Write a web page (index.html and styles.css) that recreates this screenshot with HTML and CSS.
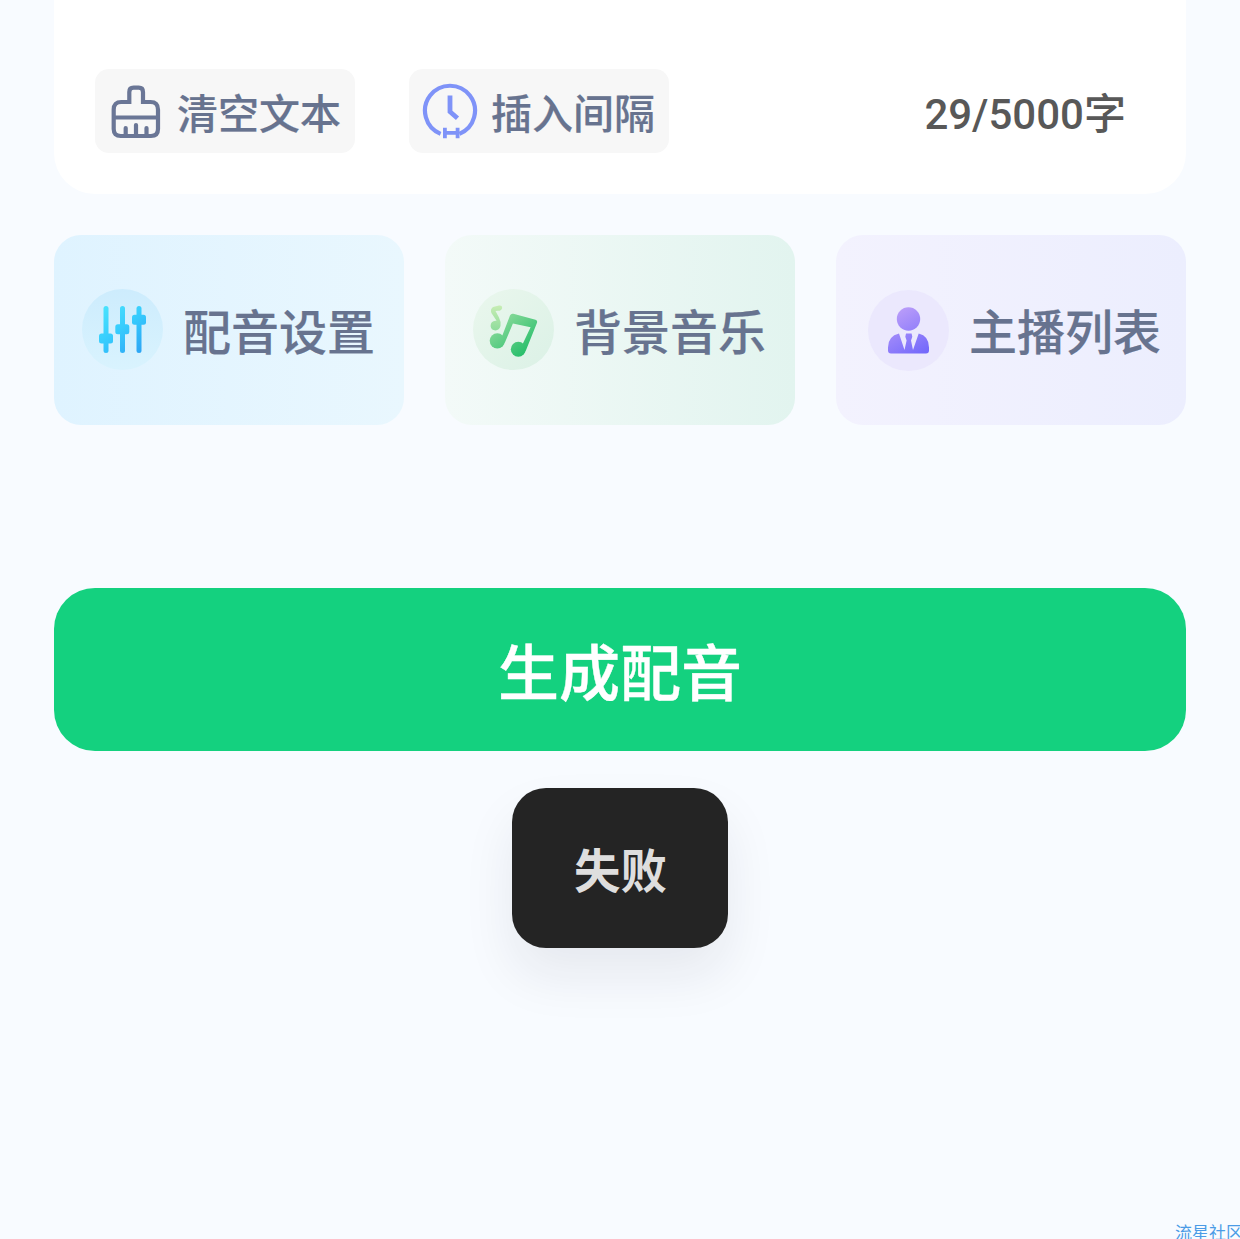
FILE: index.html
```html
<!DOCTYPE html>
<html lang="zh-CN">
<head>
    <meta charset="UTF-8">
    <meta name="viewport" content="width=device-width, initial-scale=1.0">
    <title>配音</title>
    <link rel="stylesheet" href="styles.css">
</head>
<body>
    <div class="container">
        <!-- 文本框底部工具栏 -->
        <div class="editor">
            <button class="tool">
                <svg width="56" height="56" viewBox="0 0 56 56" fill="none" stroke="#6a7696" stroke-width="4.2" stroke-linecap="round">
                    <path d="M21.3 19V9q0-4.3 4.3-4.3h5.1q4.3 0 4.3 4.3v10h7.5q7.5 0 7.5 7.5v19.5q0 7-7 7H12.700q-7 0-7-7V26.5q0-7.5 7.5-7.5z"/>
                    <path d="M6 34.5h44M17.7 45v7M28 42v10M38.5 45v7"/>
                </svg>
                <span>清空文本</span>
            </button>
            <button class="tool">
                <svg width="56" height="56" viewBox="0 0 56 56" fill="none" stroke="#7f93f8" stroke-width="4.2">
                    <path d="M18.6 50.9A25 25 0 1 1 37.4 50.9"/>
                    <path d="M28 12.5v16.2l7.5 6.5" stroke-width="4.8"/>
                    <path d="M22.9 44.7v10.5M35.6 44.7v10.5M23 49.9h12.5" stroke-width="3.8"/>
                </svg>
                <span>插入间隔</span>
            </button>
            <span class="count">29/5000字</span>
        </div>

        <!-- 功能卡片 -->
        <div class="cards">
            <div class="card card-blue">
                <svg width="81" height="81" viewBox="0 0 81 81">
                    <defs>
                        <linearGradient id="bg1" x1="0" y1="0" x2="0" y2="1">
                            <stop offset="0" stop-color="#cdecfd"/>
                            <stop offset="1" stop-color="#d9f3fe"/>
                        </linearGradient>
                        <linearGradient id="blue" gradientUnits="userSpaceOnUse" x1="20" y1="17" x2="58" y2="64">
                            <stop offset="0" stop-color="#4be4fd"/>
                            <stop offset="0.5" stop-color="#36cbfd"/>
                            <stop offset="1" stop-color="#2da5f5"/>
                        </linearGradient>
                    </defs>
                    <circle cx="40.5" cy="40.5" r="40.5" fill="url(#bg1)"/>
                    <g fill="url(#blue)">
                        <rect x="21.5" y="17" width="5" height="47" rx="2.5"/>
                        <rect x="38" y="17" width="5" height="47" rx="2.5"/>
                        <rect x="54.5" y="17" width="5" height="47" rx="2.5"/>
                        <rect x="17" y="44.5" width="14" height="10" rx="2.5"/>
                        <rect x="33.3" y="35.3" width="14" height="10" rx="2.5"/>
                        <rect x="50" y="25.8" width="14" height="10" rx="2.5"/>
                    </g>
                </svg>
                <span>配音设置</span>
            </div>
            <div class="card card-green">
                <svg width="81" height="81" viewBox="0 0 81 81">
                    <defs>
                        <linearGradient id="bg2" x1="0" y1="0" x2="1" y2="1">
                            <stop offset="0" stop-color="#eaf7ed"/>
                            <stop offset="1" stop-color="#dbf1e6"/>
                        </linearGradient>
                        <linearGradient id="green" gradientUnits="userSpaceOnUse" x1="26" y1="28" x2="54" y2="62">
                            <stop offset="0" stop-color="#8edb9c"/>
                            <stop offset="1" stop-color="#2abf6c"/>
                        </linearGradient>
                        <linearGradient id="lime" x1="0" y1="0" x2="0" y2="1">
                            <stop offset="0" stop-color="#c7edb4"/>
                            <stop offset="1" stop-color="#8fdc9b"/>
                        </linearGradient>
                    </defs>
                    <circle cx="40.5" cy="40.5" r="40.5" fill="url(#bg2)"/>
                    <g fill="url(#green)">
                        <circle cx="24.3" cy="51.8" r="7.6"/>
                        <circle cx="45.3" cy="60.3" r="7.5"/>
                        <path d="M28 50L37 26.5q1-2.2 3.300-1.700L62.500 30.800q2.200.8 1.500 3L52.700 62l-4.700-3.500L57.600 38.300l-17.700-3.800L31.700 54z"/>
                    </g>
                    <path fill="url(#lime)" d="M17.6 37q0-4.800 5-5.200h1L18.400 24q-1.400-4 1.600-6l6-1.500q3.200-.5 3.200 2.400-.8 3-4.200 2.800l-2.500.3L26 28.500q2.300 4.500 1.500 8.500-1.300 4.400-5 4.400-4.600-.2-4.900-4.400z"/>
                </svg>
                <span>背景音乐</span>
            </div>
            <div class="card card-purple">
                <svg width="81" height="81" viewBox="0 0 81 81">
                    <defs>
                        <linearGradient id="purple" gradientUnits="userSpaceOnUse" x1="28" y1="18" x2="54" y2="64">
                            <stop offset="0" stop-color="#bd9ff9"/>
                            <stop offset="1" stop-color="#7469fb"/>
                        </linearGradient>
                    </defs>
                    <circle cx="40.5" cy="40.5" r="40.5" fill="#ebe8fd"/>
                    <g fill="url(#purple)">
                        <circle cx="40.5" cy="29" r="11.7"/>
                        <path d="M31 43.500L36.500 60l2.100-9.500-1.300-3.700L38 43.500h5.600l.7 3.300-1.300 3.700L45 60l5.700-16.500Q61 46 61 57.500v3q0 3-3 3H23q-3 0-3-3v-3Q20 46 31 43.500z"/>
                    </g>
                </svg>
                <span>主播列表</span>
            </div>
        </div>

        <button class="submit">生成配音</button>

        <div class="toast">失败</div>
    </div>

    <div class="watermark">流星社区</div>
</body>
</html>
```

FILE: styles.css
```css
* {
    box-sizing: border-box;
}
body {
    font-family: "Noto Sans CJK SC", sans-serif;
    font-weight: 500;
    background-color: #f8fbff;
    height: 1239px;
    margin: 0;
    position: relative;
    overflow: hidden;
}
button {
    border: none;
    font-family: inherit;
    font-weight: inherit;
}
svg {
    flex: none;
}
.container {
    display: flex;
    flex-direction: column;
    width: 1132px;
    margin: 0 auto;
}
.editor {
    display: flex;
    align-items: flex-start;
    height: 194px;
    padding: 69px 60px 0 41px;
    background-color: white;
    border-radius: 0 0 41px 41px;
}
.tool {
    display: flex;
    align-items: center;
    gap: 13px;
    width: 260px;
    height: 84px;
    margin-right: 54px;
    padding: 0 0 0 13px;
    background-color: #f7f7f7;
    border-radius: 14px;
    color: #67738f;
    font-size: 41px;
    line-height: 60px;
    white-space: nowrap;
    -webkit-text-stroke: 0.2px;
}
.tool span {
    padding-bottom: 1px;
}
.count {
    margin-left: auto;
    padding-top: 16px;
    color: #585858;
    font-family: Roboto, "Noto Sans CJK SC", sans-serif;
    font-size: 42px;
    line-height: 60px;
}
.cards {
    display: flex;
    justify-content: space-between;
    margin-top: 41px;
}
.card {
    display: flex;
    align-items: center;
    gap: 20px;
    width: 350px;
    height: 190px;
    padding: 0 0 2px 28px;
    border-radius: 27px;
    color: #67738f;
    font-size: 48px;
    line-height: 70px;
    white-space: nowrap;
    -webkit-text-stroke: 0.2px;
}
.card-blue {
    background: linear-gradient(to right, #dff3ff, #e9f7fe);
}
.card-green {
    background: linear-gradient(to right, #f3faf8, #e2f4ef);
}
.card-purple {
    padding: 1px 0 0 32px;
    background: linear-gradient(to right, #f3f2fe, #eceefe);
}
.card-purple span {
    padding-bottom: 3px;
}
.submit {
    height: 163px;
    margin-top: 163px;
    padding: 0;
    background-color: #14d17f;
    border-radius: 41px;
    color: white;
    font-size: 61px;
    line-height: 90px;
    -webkit-text-stroke: 0.4px;
}
.toast {
    align-self: center;
    width: 216px;
    height: 160px;
    margin-top: 37px;
    background-color: #242424;
    border-radius: 34px;
    box-shadow: 0 28px 52px rgba(30, 30, 50, 0.08);
    color: #dedede;
    font-size: 46.5px;
    font-weight: bold;
    line-height: 160px;
    text-align: center;
    text-indent: 1px;
}
.watermark {
    position: absolute;
    left: 1175px;
    top: 1219px;
    color: #4b9be6;
    font-size: 17px;
    font-weight: 400;
    line-height: 25px;
    white-space: nowrap;
}
```
